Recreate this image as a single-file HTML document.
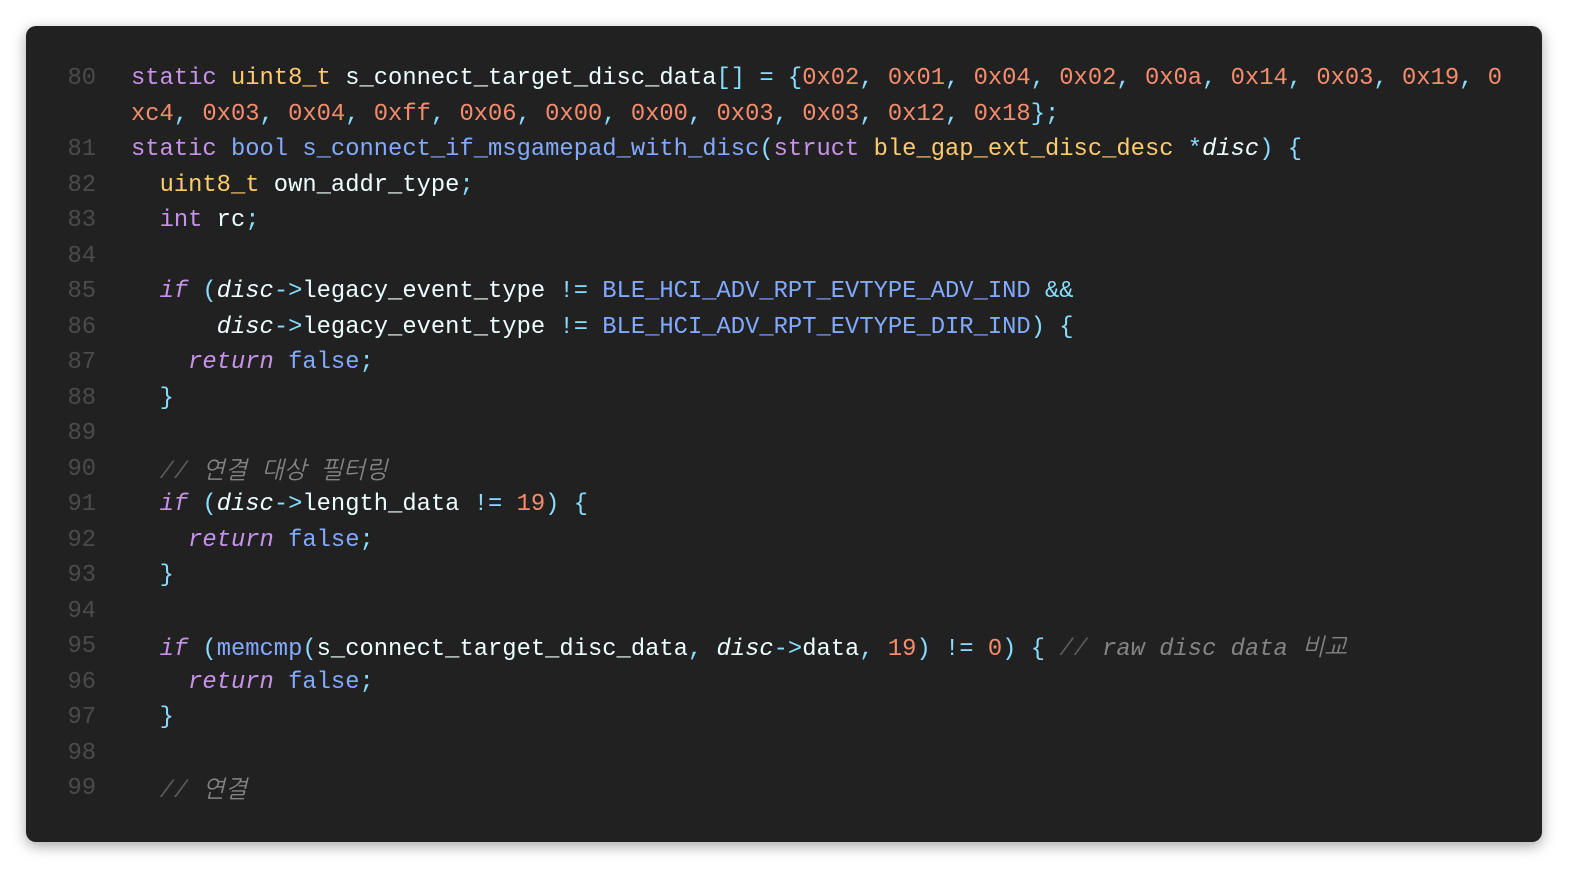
<!DOCTYPE html>
<html><head><meta charset="utf-8"><style>
body{margin:0;background:#fff;width:1590px;height:880px;overflow:hidden}
.p{position:absolute;left:26px;top:26px;width:1516px;height:816px;background:#212121;border-radius:10px;box-shadow:0 4px 14px rgba(0,0,0,.35)}
.w{position:absolute;left:0;top:4px;width:100%}
.l{position:absolute;left:0;height:35.5px;line-height:35.5px;font:23.8px "Liberation Mono","NanumGothic",monospace;white-space:pre;color:#eeffff}
.n{position:absolute;left:30px;width:40px;text-align:right;color:#4b4b4b}
.c{position:absolute;left:105px}
.k{color:#c792ea}.y{color:#ffcb6b}.b{color:#82aaff}.o{color:#f78c6c}.u{color:#89ddff}.i{font-style:italic}
.cm{color:#5a5a5a;font-style:italic}.ct{color:#848484;font-style:italic}
</style></head><body><div class="p"><div class="w">
<div class="l" style="top:35px"><span class="n">80</span><span class="c"><span class="k">static</span> <span class="y">uint8_t</span> s_connect_target_disc_data<span class="u">[]</span> <span class="u">=</span> <span class="u">{</span><span class="o">0x02</span><span class="u">,</span> <span class="o">0x01</span><span class="u">,</span> <span class="o">0x04</span><span class="u">,</span> <span class="o">0x02</span><span class="u">,</span> <span class="o">0x0a</span><span class="u">,</span> <span class="o">0x14</span><span class="u">,</span> <span class="o">0x03</span><span class="u">,</span> <span class="o">0x19</span><span class="u">,</span> <span class="o">0</span></span></div>
<div class="l" style="top:70.5px"><span class="c"><span class="o">xc4</span><span class="u">,</span> <span class="o">0x03</span><span class="u">,</span> <span class="o">0x04</span><span class="u">,</span> <span class="o">0xff</span><span class="u">,</span> <span class="o">0x06</span><span class="u">,</span> <span class="o">0x00</span><span class="u">,</span> <span class="o">0x00</span><span class="u">,</span> <span class="o">0x03</span><span class="u">,</span> <span class="o">0x03</span><span class="u">,</span> <span class="o">0x12</span><span class="u">,</span> <span class="o">0x18</span><span class="u">};</span></span></div>
<div class="l" style="top:106px"><span class="n">81</span><span class="c"><span class="k">static</span> <span class="b">bool</span> <span class="b">s_connect_if_msgamepad_with_disc</span><span class="u">(</span><span class="k">struct</span> <span class="y">ble_gap_ext_disc_desc</span> <span class="u">*</span><span class="i">disc</span><span class="u">)</span> <span class="u">{</span></span></div>
<div class="l" style="top:141.5px"><span class="n">82</span><span class="c">  <span class="y">uint8_t</span> own_addr_type<span class="u">;</span></span></div>
<div class="l" style="top:177px"><span class="n">83</span><span class="c">  <span class="k">int</span> rc<span class="u">;</span></span></div>
<div class="l" style="top:212.5px"><span class="n">84</span></div>
<div class="l" style="top:248px"><span class="n">85</span><span class="c">  <span class="k i">if</span> <span class="u">(</span><span class="i">disc</span><span class="u">-&gt;</span>legacy_event_type <span class="u">!=</span> <span class="b">BLE_HCI_ADV_RPT_EVTYPE_ADV_IND</span> <span class="u">&amp;&amp;</span></span></div>
<div class="l" style="top:283.5px"><span class="n">86</span><span class="c">      <span class="i">disc</span><span class="u">-&gt;</span>legacy_event_type <span class="u">!=</span> <span class="b">BLE_HCI_ADV_RPT_EVTYPE_DIR_IND</span><span class="u">)</span> <span class="u">{</span></span></div>
<div class="l" style="top:319px"><span class="n">87</span><span class="c">    <span class="k i">return</span> <span class="b">false</span><span class="u">;</span></span></div>
<div class="l" style="top:354.5px"><span class="n">88</span><span class="c">  <span class="u">}</span></span></div>
<div class="l" style="top:390px"><span class="n">89</span></div>
<div class="l" style="top:425.5px"><span class="n">90</span><span class="c">  <span class="cm">//</span> <span class="ct">연결 대상 필터링</span></span></div>
<div class="l" style="top:461px"><span class="n">91</span><span class="c">  <span class="k i">if</span> <span class="u">(</span><span class="i">disc</span><span class="u">-&gt;</span>length_data <span class="u">!=</span> <span class="o">19</span><span class="u">)</span> <span class="u">{</span></span></div>
<div class="l" style="top:496.5px"><span class="n">92</span><span class="c">    <span class="k i">return</span> <span class="b">false</span><span class="u">;</span></span></div>
<div class="l" style="top:532px"><span class="n">93</span><span class="c">  <span class="u">}</span></span></div>
<div class="l" style="top:567.5px"><span class="n">94</span></div>
<div class="l" style="top:603px"><span class="n">95</span><span class="c">  <span class="k i">if</span> <span class="u">(</span><span class="b">memcmp</span><span class="u">(</span>s_connect_target_disc_data<span class="u">,</span> <span class="i">disc</span><span class="u">-&gt;</span>data<span class="u">,</span> <span class="o">19</span><span class="u">)</span> <span class="u">!=</span> <span class="o">0</span><span class="u">)</span> <span class="u">{</span> <span class="cm">//</span> <span class="ct">raw disc data 비교</span></span></div>
<div class="l" style="top:638.5px"><span class="n">96</span><span class="c">    <span class="k i">return</span> <span class="b">false</span><span class="u">;</span></span></div>
<div class="l" style="top:674px"><span class="n">97</span><span class="c">  <span class="u">}</span></span></div>
<div class="l" style="top:709.5px"><span class="n">98</span></div>
<div class="l" style="top:745px"><span class="n">99</span><span class="c">  <span class="cm">//</span> <span class="ct">연결</span></span></div>
</div></div></body></html>
